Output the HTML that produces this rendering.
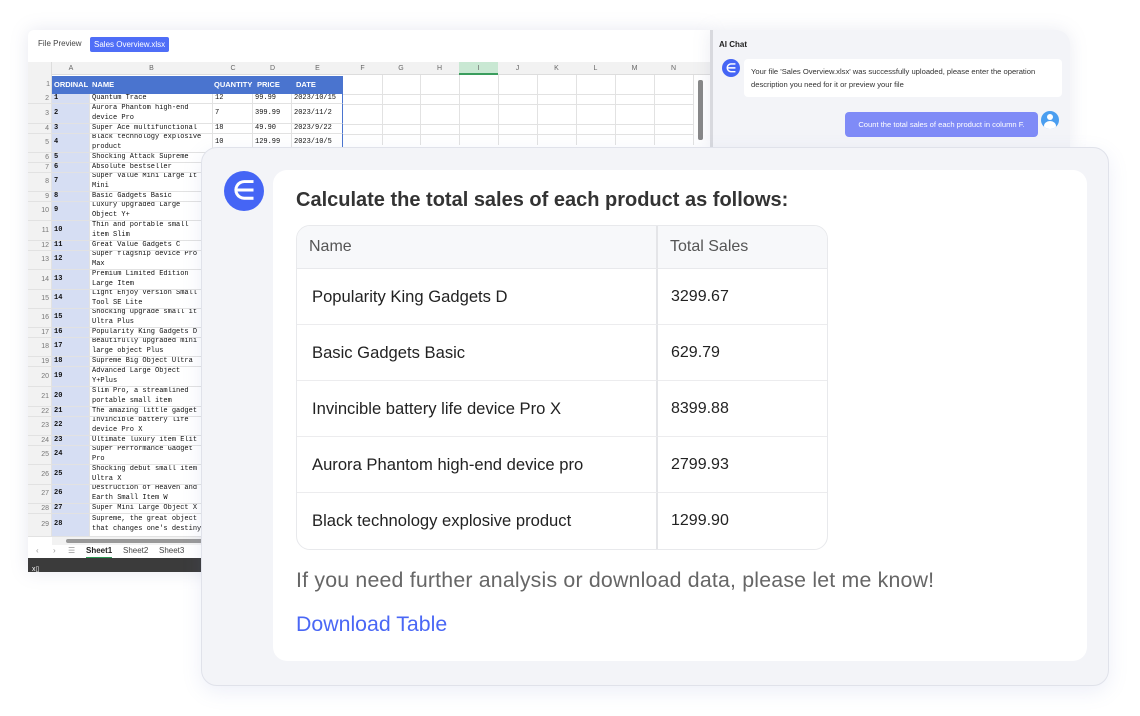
<!DOCTYPE html>
<html><head><meta charset="utf-8"><style>
*{box-sizing:border-box;margin:0;padding:0}
body{width:1140px;height:716px;background:#fff;position:relative;overflow:hidden;font-family:"Liberation Sans",sans-serif}
.abs{position:absolute}
#sheet{left:28px;top:30px;width:682px;height:542px;background:#fff;box-shadow:0 0 18px rgba(120,130,170,.18);border-radius:6px 0 0 0;overflow:hidden}
.tab1{left:10px;top:9px;font-size:8px;color:#444}
.tab2{left:62px;top:7px;font-size:8px;color:#fff;background:#4f6ef7;border-radius:2px;padding:3px 4px}
.colh{top:32px;height:13px;background:#f2f2f2;border-bottom:1px solid #ddd;font-size:7px;color:#666;text-align:center;line-height:13px}
.cell{border-right:1px solid #e2e2e2;border-bottom:1px solid #e2e2e2;font-family:"Liberation Mono",monospace;font-size:7px;line-height:9.6px;color:#111;overflow:hidden;white-space:nowrap;display:flex;align-items:center}
#chat{left:710px;top:30px;width:360px;height:120px;background:#f3f4f8;box-shadow:0 0 18px rgba(120,130,170,.15);border-radius:0 14px 0 0;border-left:3px solid #d8d9de}
#card{left:201px;top:147px;width:908px;height:539px;background:#f3f4f8;border:1px solid #e0e2ea;border-radius:16px;box-shadow:0 6px 20px rgba(110,120,200,.12)}
#inner{left:71px;top:22px;width:814px;height:491px;background:#fff;border-radius:14px}
.av{border-radius:50%;background:#4565f5;color:#fff;text-align:center;font-weight:bold}
table.t{border-collapse:separate;border-spacing:0;border:1.5px solid #e8e9ec;border-radius:14px;overflow:hidden}
.t td{border-bottom:1.5px solid #ececee;font-size:16.6px;color:#222;height:56px;padding-left:15px}
.t td:last-child{padding-left:13px;font-size:16px}
.t tr:last-child td{border-bottom:none}
.t td:first-child{border-right:2px solid #e4e5e8;width:361px}
.t th{background:#f7f8fa;font-weight:normal;color:#555;text-align:left;font-size:16px;height:43px;padding-left:12px;border-bottom:1.5px solid #e8e9ec}
.t th:first-child{border-right:2px solid #e4e5e8}
</style></head><body>
<div id="sheet" class="abs">
<div class="abs tab1">File Preview</div>
<div class="abs tab2">Sales Overview.xlsx</div>
<div class="abs" style="left:0;top:32px;width:682px;height:13px;background:#f2f2f2;border-bottom:1px solid #ddd"></div>
<div class="abs colh" style="left:24px;width:38px">A</div>
<div class="abs colh" style="left:62px;width:123px">B</div>
<div class="abs colh" style="left:185px;width:40px">C</div>
<div class="abs colh" style="left:225px;width:39px">D</div>
<div class="abs colh" style="left:264px;width:51px">E</div>
<div class="abs colh" style="left:315px;width:39px">F</div>
<div class="abs colh" style="left:354px;width:38px">G</div>
<div class="abs colh" style="left:392px;width:39px">H</div>
<div class="abs colh" style="left:431px;width:39px;background:#c9e8d3;border-bottom:2px solid #3a9d5d">I</div>
<div class="abs colh" style="left:470px;width:39px">J</div>
<div class="abs colh" style="left:509px;width:39px">K</div>
<div class="abs colh" style="left:548px;width:39px">L</div>
<div class="abs colh" style="left:587px;width:39px">M</div>
<div class="abs colh" style="left:626px;width:39px">N</div>
<div class="abs" style="left:0;top:32px;width:24px;height:475px;background:#f2f2f2;border-right:1px solid #ddd"></div>
<div class="abs" style="left:0;top:46px;width:22px;font-size:7px;color:#777;text-align:right;line-height:18px">1</div>
<div class="abs" style="left:24px;top:46px;width:38px;height:461px;background:#d6def3"></div>
<div class="abs" style="left:24px;top:46px;width:291px;height:18px;background:#4a74cf"></div>
<div class="abs" style="left:26px;top:46px;font-size:7.5px;font-weight:bold;color:#fff;line-height:18px">ORDINAL</div>
<div class="abs" style="left:64px;top:46px;font-size:7.5px;font-weight:bold;color:#fff;line-height:18px">NAME</div>
<div class="abs" style="left:186px;top:46px;font-size:7.5px;font-weight:bold;color:#fff;line-height:18px">QUANTITY</div>
<div class="abs" style="left:229px;top:46px;font-size:7.5px;font-weight:bold;color:#fff;line-height:18px">PRICE</div>
<div class="abs" style="left:268px;top:46px;font-size:7.5px;font-weight:bold;color:#fff;line-height:18px">DATE</div>
<div class="abs" style="left:314px;top:46px;width:1px;height:70px;background:#4a74cf"></div>
<svg class="abs" style="left:0;top:45px" width="682" height="70">
<g stroke="#e2e2e2" stroke-width="1">
<line x1="354.5" y1="0" x2="354.5" y2="70"/><line x1="392.5" y1="0" x2="392.5" y2="70"/><line x1="431.5" y1="0" x2="431.5" y2="70"/><line x1="470.5" y1="0" x2="470.5" y2="70"/><line x1="509.5" y1="0" x2="509.5" y2="70"/><line x1="548.5" y1="0" x2="548.5" y2="70"/><line x1="587.5" y1="0" x2="587.5" y2="70"/><line x1="626.5" y1="0" x2="626.5" y2="70"/><line x1="665.5" y1="0" x2="665.5" y2="70"/>
<line x1="315" y1="19.5" x2="665" y2="19.5"/><line x1="315" y1="29.5" x2="665" y2="29.5"/><line x1="315" y1="49.5" x2="665" y2="49.5"/><line x1="315" y1="59.5" x2="665" y2="59.5"/>
</g></svg>
<div class="abs" style="left:670px;top:50px;width:5px;height:60px;background:#888;border-radius:2px"></div>
<div class="abs" id="rows" style="left:0;top:64px;width:315px"></div>
<div class="abs" style="left:24px;top:507px;width:291px;height:8px;background:#f2f2f2"></div>
<div class="abs" style="left:38px;top:509px;width:280px;height:4px;background:#999;border-radius:2px"></div>
<div class="abs" style="left:0;top:515px;width:315px;height:13px;font-size:8px;color:#999;line-height:12px">
<span style="position:absolute;left:8px">‹</span><span style="position:absolute;left:25px">›</span><span style="position:absolute;left:40px">☰</span>
<span style="position:absolute;left:58px;color:#222;font-weight:bold;border-bottom:2px solid #2e9a55">Sheet1</span>
<span style="position:absolute;left:95px;color:#444">Sheet2</span><span style="position:absolute;left:131px;color:#444">Sheet3</span></div>
<div class="abs" style="left:0;top:528px;width:682px;height:14px;background:#3b3b3b"><span style="color:#fff;font-size:7px;margin-left:4px">x▯</span></div>
</div>

<div id="chat" class="abs">
<div class="abs" style="left:6px;top:10px;font-size:8px;font-weight:bold;color:#222">AI Chat</div>
<div class="abs av" style="left:9px;top:29px;width:18px;height:18px;font-size:12px;line-height:18px">∈</div>
<div class="abs" style="left:31px;top:29px;width:318px;height:38px;background:#fff;border-radius:4px;font-size:7.6px;color:#333;padding:7px 7px;line-height:12.5px">Your file 'Sales Overview.xlsx' was successfully uploaded, please enter the operation description you need for it or preview your file</div>
<div class="abs" style="left:132px;top:82px;width:193px;height:25px;background:#7f8bf7;border-radius:4px;font-size:7.6px;color:#fff;line-height:25px;text-align:center">Count the total sales of each product in column F.</div>
<div class="abs" style="left:328px;top:81px;width:18px;height:18px;border-radius:50%;background:#4a9ef0;overflow:hidden"><div style="position:absolute;left:6px;top:3px;width:6px;height:6px;border-radius:50%;background:#fff"></div><div style="position:absolute;left:3px;top:10px;width:12px;height:10px;border-radius:50%;background:#fff"></div></div>
</div>

<div id="card" class="abs">
<div class="abs av" style="left:22px;top:23px;width:40px;height:40px;font-size:26px;line-height:38px">∈</div>
<div id="inner" class="abs">
<div class="abs" style="left:23px;top:19px;font-size:20px;font-weight:bold;color:#333">Calculate the total sales of each product as follows:</div>
<table class="t abs" style="left:23px;top:55px;width:532px">
<tr><th>Name</th><th>Total Sales</th></tr>
<tr><td>Popularity King Gadgets D</td><td>3299.67</td></tr>
<tr><td>Basic Gadgets Basic</td><td>629.79</td></tr>
<tr><td>Invincible battery life device Pro X</td><td>8399.88</td></tr>
<tr><td>Aurora Phantom high-end device pro</td><td>2799.93</td></tr>
<tr><td>Black technology explosive product</td><td>1299.90</td></tr>
</table>
<div class="abs" style="left:23px;top:398px;font-size:21.3px;color:#666;letter-spacing:.2px">If you need further analysis or download data, please let me know!</div>
<div class="abs" style="left:23px;top:442px;font-size:21.3px;color:#4a67f5">Download Table</div>
</div>
</div>
<script>
var d=[[10,"Quantum Trace","12","99.99","2023/10/15"],[20,"Aurora Phantom high-end|device Pro","7","399.99","2023/11/2"],[10,"Super Ace multifunctional","18","49.90","2023/9/22"],[19,"Black technology explosive|product","10","129.99","2023/10/5"],[10,"Shocking Attack Supreme"],[10,"Absolute bestseller"],[19,"Super Value Mini Large It|Mini"],[10,"Basic Gadgets Basic"],[19,"Luxury Upgraded Large|Object Y+"],[20,"Thin and portable small|item Slim"],[10,"Great Value Gadgets C"],[19,"Super flagship device Pro|Max"],[20,"Premium Limited Edition|Large Item"],[19,"Light Enjoy Version Small|Tool SE Lite"],[19,"Shocking upgrade small it|Ultra Plus"],[10,"Popularity King Gadgets D"],[19,"Beautifully upgraded mini|large object Plus"],[10,"Supreme Big Object Ultra"],[20,"Advanced Large Object|Y+Plus"],[20,"Slim Pro, a streamlined|portable small item"],[10,"The amazing little gadget"],[19,"Invincible battery life|device Pro X"],[10,"Ultimate luxury item Elit"],[19,"Super Performance Gadget|Pro"],[20,"Shocking debut small item|Ultra X"],[19,"Destruction of Heaven and|Earth Small Item W"],[10,"Super Mini Large Object X"],[23,"Supreme, the great object|that changes one's destiny"]];
var h="";d.forEach(function(r,i){var s="display:flex;height:"+r[0]+"px";h+='<div style="'+s+'">'+
'<div class="cell" style="width:24px;justify-content:flex-end;padding-right:2px;color:#777;font-family:Liberation Sans;font-size:7px;background:#f2f2f2">'+(i+2)+'</div>'+
'<div class="cell" style="width:38px;padding-left:2px;font-weight:bold;background:#d6def3">'+(i+1)+'</div>'+
'<div class="cell" style="width:123px;padding-left:2px;background:#fff">'+r[1].replace("|","<br>")+'</div>'+
'<div class="cell" style="width:40px;padding-left:2px;background:#fff">'+(r[2]||"")+'</div>'+
'<div class="cell" style="width:39px;padding-left:2px;background:#fff">'+(r[3]||"")+'</div>'+
'<div class="cell" style="width:51px;padding-left:2px;background:#fff;border-right:1px solid #4a74cf">'+(r[4]||"")+'</div></div>';});
document.getElementById("rows").innerHTML=h;
</script>
</body></html>
